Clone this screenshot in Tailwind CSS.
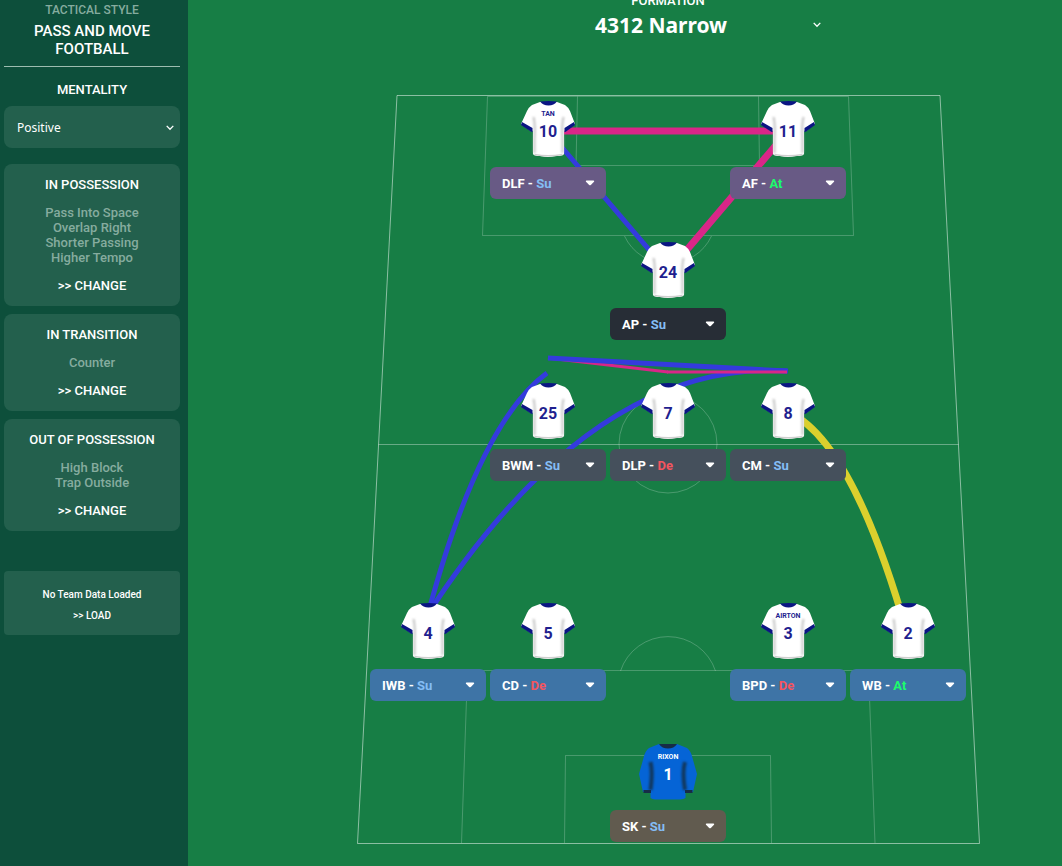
<!DOCTYPE html>
<html lang="en">
<head>
    <meta charset="UTF-8">
    <meta name="viewport" content="width=device-width, initial-scale=1.0">
    <title>Tactics Board</title>
    <script src="https://cdn.jsdelivr.net/npm/@tailwindcss/browser@4"></script>
</head>
<body class="bg-[#177e45] font-[Roboto,sans-serif] text-white text-[13px] leading-[15px] font-medium">
    <!-- Shared shapes -->
    <svg class="hidden" width="0" height="0">
        <defs>
            <filter id="soft" x="-100%" y="-20%" width="300%" height="140%"><feGaussianBlur stdDeviation="1"/></filter>
            <symbol id="shirt" viewBox="0 0 56 56">
                <path d="M20 1 L12 4 Q9 6 7 10 L1 23 L12 31 L13 29 V53 Q14 55 20 55 Q28 57 36 55 Q43 55 44 53 V29 L45 31 L55 23 L50 10 Q48 6 45 4 L37 1 Z" fill="#fff"/>
                <path d="M14.5 53.5 Q28 56 42.5 53.5" fill="none" stroke="#cfcfcf" stroke-width="1.5"/>
                <path d="M13.5 16 Q15.5 24 14.5 38 V52 M43.5 16 Q41.5 24 42.5 38 V52" fill="none" stroke="#c4c4c4" stroke-width="2" filter="url(#soft)"/>
                <path d="M2 21 L12.5 27 V31 L11.5 31 L1 24 Z M54 21 L44.5 27 V31 L45.5 31 L55 24 Z" fill="#0b1583"/>
                <path d="M20 0.5 Q28.5 -0.5 37 0.5 Q34 4.5 28.5 4.5 Q23 4.5 20 0.5 Z" fill="#0b1583"/>
            </symbol>
            <symbol id="keeper" viewBox="0 0 58 56">
                <path d="M20 0 L10 4 Q6 7 4.5 14 L0 30 L4 48 H11.5 V54 Q13 55 16 55.5 H41 Q45 55 46.5 54 V48 H54 L58 30 L53.5 14 Q52 7 48 4 L38 0 Z" fill="#0564d6"/>
                <path d="M11.5 18 Q14 28 11.5 46 M46 18 Q43 28 46 46" fill="none" stroke="#12395f" stroke-width="4" filter="url(#soft)"/>
                <path d="M4.5 46 H12 V49 H4.5 Z M46 46 H53.5 V49 H46 Z" fill="#172c46"/>
                <path d="M20 0 H38 Q35 4.5 29 4.5 Q23 4.5 20 0 Z" fill="#172c46"/>
            </symbol>
        </defs>
    </svg>

    <div class="flex min-h-screen">
        <!-- Sidebar -->
        <aside class="w-[188px] shrink-0 bg-[#0d4f3b] pl-1 pr-2 pt-[3px] text-center">
            <div class="border-b border-[#9dbdb0] pb-2">
                <p class="text-[12px] text-[#86ac9f]">TACTICAL STYLE</p>
                <h1 class="mt-1 text-[15px] leading-[18px]">PASS AND MOVE<br>FOOTBALL</h1>
            </div>

            <label for="mentality" class="block mt-[15px]">MENTALITY</label>
            <div class="relative mt-[9px]">
                <select id="mentality" class="appearance-none w-full h-[42px] rounded-lg bg-[#23604d] px-[13px] font-['Noto_Sans',sans-serif] text-[12px] font-normal">
                    <option>Positive</option>
                    <option>Balanced</option>
                    <option>Cautious</option>
                </select>
                <svg class="absolute right-[6px] top-[19px] pointer-events-none" width="8" height="6" viewBox="0 0 8 6" fill="none" stroke="#fff" stroke-width="1.3"><path d="M0.7 0.9 L4 4.3 L7.3 0.9"/></svg>
            </div>

            <div class="mt-4 flex flex-col gap-2">
                <section class="rounded-lg bg-[#23604d] py-[13px]">
                    <h2>IN POSSESSION</h2>
                    <ul class="my-[13px] text-[#86ac9f]">
                        <li>Pass Into Space</li>
                        <li>Overlap Right</li>
                        <li>Shorter Passing</li>
                        <li>Higher Tempo</li>
                    </ul>
                    <button class="block mx-auto">&gt;&gt; CHANGE</button>
                </section>
                <section class="rounded-lg bg-[#23604d] py-[13px]">
                    <h2>IN TRANSITION</h2>
                    <ul class="my-[13px] text-[#86ac9f]">
                        <li>Counter</li>
                    </ul>
                    <button class="block mx-auto">&gt;&gt; CHANGE</button>
                </section>
                <section class="rounded-lg bg-[#23604d] py-[13px]">
                    <h2>OUT OF POSSESSION</h2>
                    <ul class="my-[13px] text-[#86ac9f]">
                        <li>High Block</li>
                        <li>Trap Outside</li>
                    </ul>
                    <button class="block mx-auto">&gt;&gt; CHANGE</button>
                </section>
            </div>

            <section class="mt-10 rounded bg-[#23604d] pt-4 pb-3 text-[10px]">
                <p>No Team Data Loaded</p>
                <button class="block mx-auto mt-[6px]">&gt;&gt; LOAD</button>
            </section>
        </aside>

        <!-- Pitch -->
        <main class="flex-1 pl-[86px] overflow-hidden">
            <header class="-mt-[7px] mb-[54px] text-center">
                <label for="formation" class="block leading-4">FORMATION</label>
                <div class="relative mx-auto w-80">
                    <select id="formation" class="appearance-none w-full h-8 pr-[14px] text-center font-['Noto_Sans',sans-serif] text-[21px] font-bold">
                        <option>4312 Narrow</option>
                        <option>442</option>
                        <option>433</option>
                    </select>
                    <svg class="absolute right-[7px] top-[13px] pointer-events-none" width="8" height="6" viewBox="0 0 8 6" fill="none" stroke="#fff" stroke-width="1.3"><path d="M0.7 0.9 L4 4.3 L7.3 0.9"/></svg>
                </div>
            </header>

            <div class="relative mx-auto w-[624px] pt-[6px]">
                <svg class="absolute left-0 top-0" width="624" height="750" viewBox="356 95 624 750" fill="none">
                    <!-- Markings -->
                    <g stroke="#fff" stroke-opacity="0.5">
                        <path d="M397 95.5 H940 L979.5 843.5 H357.5 Z"/>
                    </g>
                    <g stroke="#fff" stroke-opacity="0.22">
                        <path d="M487.5 96.5 H848.5 L853.5 235.5 H482.5 Z"/>
                        <path d="M577.5 96.5 L576 165.5 H759.5 L758.5 96.5"/>
                        <path d="M624.5 236 A48 48 0 0 0 711.5 236"/>
                        <path d="M378.5 444.5 H958.5" stroke-opacity="0.35"/>
                        <circle cx="668" cy="444" r="49"/>
                        <path d="M620.5 671 A50 50 0 0 1 715.5 671"/>
                        <path d="M461.5 843 L467.5 670.5 H868.5 L875 843"/>
                        <path d="M564.5 843 L565.5 755.5 H770.5 L771.5 843"/>
                    </g>
                    <!-- Combinations -->
                    <path d="M548 131 L668 272" stroke="#343bdd" stroke-width="5"/>
                    <path d="M548 131 H788 L668 272" stroke="#d92688" stroke-width="7"/>
                    <path d="M423 633 Q476 425 547 373" stroke="#343bdd" stroke-width="5"/>
                    <path d="M424 620 Q592 358 788 371" stroke="#343bdd" stroke-width="5"/>
                    <path d="M548 358 L668 372" stroke="#d92688" stroke-width="3"/>
                    <path d="M548 358 L787 371" stroke="#343bdd" stroke-width="5"/>
                    <path d="M667 372 H787" stroke="#d92688" stroke-width="3"/>
                    <path d="M788 412 Q852 440 907 633" stroke="#dbd02d" stroke-width="7"/>
                </svg>
                <div id="lineup" class="relative mx-auto w-[600px] flex flex-col gap-[43px]"></div>
            </div>
        </main>
    </div>

    <script>
        // One entry per line of the formation, each player placed in one of five columns
        const lines = [
            [
                { col: 'col-start-2', no: 10, name: 'TAN', role: 'DLF', duty: 'Su', color: 'bg-[#685a85]' },
                { col: 'col-start-4', no: 11, role: 'AF', duty: 'At', color: 'bg-[#685a85]' }
            ],
            [
                { col: 'col-start-3', no: 24, role: 'AP', duty: 'Su', color: 'bg-[#272d36]' }
            ],
            [
                { col: 'col-start-2', no: 25, role: 'BWM', duty: 'Su', color: 'bg-[#45505c]' },
                { col: 'col-start-3', no: 7, role: 'DLP', duty: 'De', color: 'bg-[#45505c]' },
                { col: 'col-start-4', no: 8, role: 'CM', duty: 'Su', color: 'bg-[#45505c]' }
            ],
            [],
            [
                { col: 'col-start-1', no: 4, role: 'IWB', duty: 'Su', color: 'bg-[#3e74a6]' },
                { col: 'col-start-2', no: 5, role: 'CD', duty: 'De', color: 'bg-[#3e74a6]' },
                { col: 'col-start-4', no: 3, name: 'AIRTON', role: 'BPD', duty: 'De', color: 'bg-[#3e74a6]' },
                { col: 'col-start-5', no: 2, role: 'WB', duty: 'At', color: 'bg-[#3e74a6]' }
            ],
            [
                { col: 'col-start-3', no: 1, name: 'RIXON', role: 'SK', duty: 'Su', color: 'bg-[#615b4f]', keeper: true }
            ]
        ];

        const duties = { Su: 'text-[#84bdf5]', De: 'text-[#f4555f]', At: 'text-[#1cfc6c]' };

        function player(p) {
            return `
                <div class="${p.col} row-start-1 flex flex-col items-center gap-[10px]">
                    <div class="relative w-[58px] h-14 text-center font-bold ${p.keeper ? 'text-white' : 'text-[#1f1f8f]'}">
                        <svg class="absolute inset-0 w-full h-full"><use href="${p.keeper ? '#keeper' : '#shirt'}"/></svg>
                        <div class="relative pt-[9px] text-[7px] leading-[8px] h-[22px]">${p.name || ''}</div>
                        <div class="relative text-[16px] leading-[18px]">${p.no}</div>
                    </div>
                    <button class="flex items-center justify-between w-[116px] h-8 rounded-md pl-3 pr-[11px] font-bold ${p.color}">
                        <span>${p.role} - <span class="${duties[p.duty]}">${p.duty}</span></span>
                        <svg width="10" height="6" viewBox="0 0 10 6" fill="#fff"><path d="M1.5 0.5 H8.5 Q9.8 0.7 9 1.7 L5.8 5 Q5 5.7 4.2 5 L1 1.7 Q0.2 0.7 1.5 0.5 Z"/></svg>
                    </button>
                </div>`;
        }

        document.getElementById('lineup').innerHTML = lines.map(line => line.length
            ? `<div class="grid grid-cols-5">${line.map(player).join('')}</div>`
            : '<div class="h-9"></div>'
        ).join('');
    </script>
</body>
</html>
